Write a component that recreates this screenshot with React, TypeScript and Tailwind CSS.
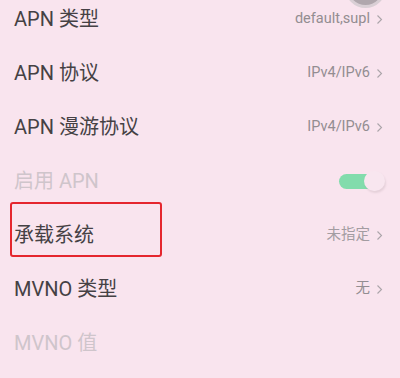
import React from "react";

const Chevron = () => (
  <svg width="7" height="11" viewBox="0 0 7 11" className="ml-[6px]" fill="none">
    <path d="M1.5 1.5 L5.5 5.5 L1.5 9.5" stroke="#aba4a9" strokeWidth="1.1" />
  </svg>
);

type RowProps = { label: string; value?: string; disabled?: boolean; toggle?: boolean; faint?: boolean };

const Row = ({ label, value, disabled, toggle, faint }: RowProps) => (
  <div className="flex h-[54px] items-center justify-between pl-[14px] pr-[17px]">
    <span
      className={`text-[20px] leading-none ${disabled ? "text-[#cfc5cb]" : "text-[#454144]"}`}
    >
      {label}
    </span>
    {value !== undefined && (
      <span className={`flex items-center text-[14.5px] ${faint ? "text-[#a39ca1]" : "text-[#938d91]"}`}>
        {value}
        <Chevron />
      </span>
    )}
    {toggle && (
      <span className="relative mr-[-2px] flex h-[20px] w-[46px] items-center">
        <span className="h-[15px] w-[36px] rounded-full bg-[#82dcac]" />
        <span className="absolute right-0 top-0 h-[20px] w-[21px] rounded-full bg-[#f8e6ef] shadow-[1px_2px_2px_rgba(140,120,130,0.18)]" />
      </span>
    )}
  </div>
);

export default function App() {
  return (
    <div
      className="relative h-[378px] w-[400px] overflow-hidden bg-[#f9e4ee]"
      style={{ fontFamily: 'Roboto, "Noto Sans CJK SC", sans-serif' }}
    >
      <div className="absolute left-[345px] top-[-33px] h-[41px] w-[41px] rounded-full border-[3px] border-[#d9cfd5] bg-[#b0a7ad]" />
      <div className="mt-[-8px] flex flex-col">
        <Row label="APN 类型" value="default,supl" />
        <Row label="APN 协议" value="IPv4/IPv6" />
        <Row label="APN 漫游协议" value="IPv4/IPv6" />
        <Row label="启用 APN" disabled toggle />
        <Row label="承载系统" value="未指定" faint />
        <Row label="MVNO 类型" value="无" />
        <Row label="MVNO 值" disabled />
      </div>
      <div className="absolute left-[10px] top-[202px] h-[55px] w-[152px] rounded-[3px] border-2 border-[#e5262e]" />
    </div>
  );
}
